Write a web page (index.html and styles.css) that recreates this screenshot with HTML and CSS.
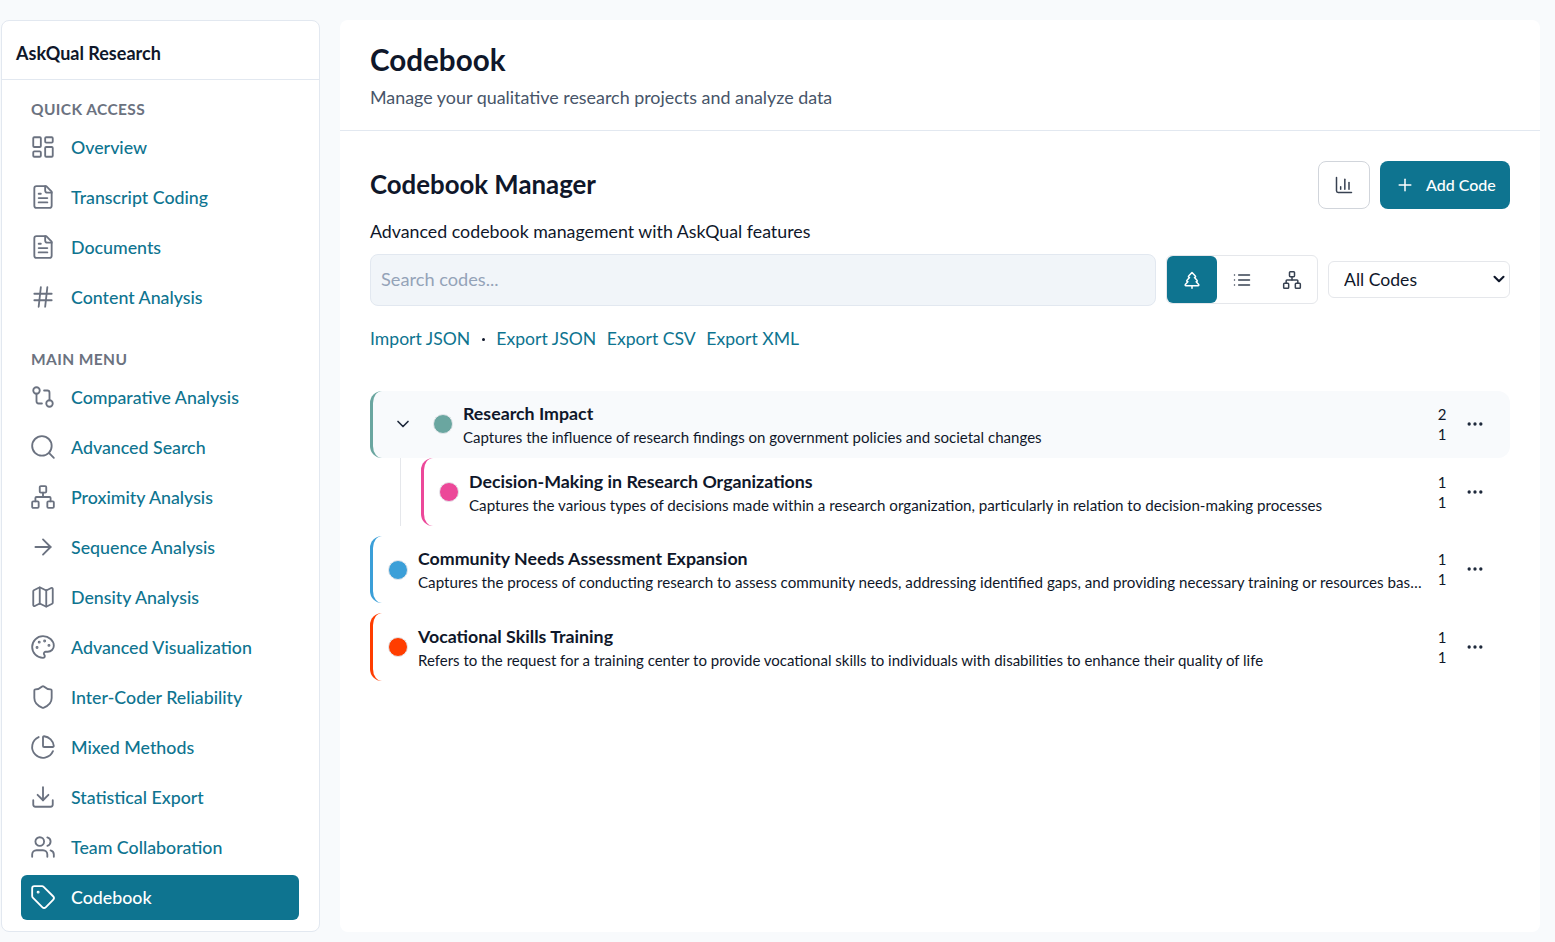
FILE: index.html
```html
<!DOCTYPE html>
<html lang="en">
<head>
    <meta charset="UTF-8">
    <meta name="viewport" content="width=device-width, initial-scale=1.0">
    <title>Codebook - AskQual Research</title>
    <link rel="stylesheet" href="styles.css">
</head>
<body>
    <aside class="sidebar">
        <div class="brand">AskQual Research</div>
        <nav class="nav">
            <div class="nav-label">QUICK ACCESS</div>
            <a class="nav-item"><svg class="icon" viewBox="0 0 24 24"><rect width="7" height="9" x="3" y="3" rx="1"/><rect width="7" height="5" x="14" y="3" rx="1"/><rect width="7" height="9" x="14" y="12" rx="1"/><rect width="7" height="5" x="3" y="16" rx="1"/></svg>Overview</a>
            <a class="nav-item"><svg class="icon" viewBox="0 0 24 24"><path d="M15 2H6a2 2 0 0 0-2 2v16a2 2 0 0 0 2 2h12a2 2 0 0 0 2-2V7Z"/><path d="M14 2v4a2 2 0 0 0 2 2h4"/><path d="M10 9H8"/><path d="M16 13H8"/><path d="M16 17H8"/></svg>Transcript Coding</a>
            <a class="nav-item"><svg class="icon" viewBox="0 0 24 24"><path d="M15 2H6a2 2 0 0 0-2 2v16a2 2 0 0 0 2 2h12a2 2 0 0 0 2-2V7Z"/><path d="M14 2v4a2 2 0 0 0 2 2h4"/><path d="M10 9H8"/><path d="M16 13H8"/><path d="M16 17H8"/></svg>Documents</a>
            <a class="nav-item"><svg class="icon" viewBox="0 0 24 24"><path d="M4 9h16"/><path d="M4 15h16"/><path d="M10 3 8 21"/><path d="M16 3l-2 18"/></svg>Content Analysis</a>

            <div class="nav-label nav-label-second">MAIN MENU</div>
            <a class="nav-item"><svg class="icon" viewBox="0 0 24 24"><circle cx="18" cy="18" r="3"/><circle cx="6" cy="6" r="3"/><path d="M13 6h3a2 2 0 0 1 2 2v7"/><path d="M11 18H8a2 2 0 0 1-2-2V9"/></svg>Comparative Analysis</a>
            <a class="nav-item"><svg class="icon" viewBox="0 0 24 24"><circle cx="11" cy="11" r="9"/><path d="m22 22-4.3-4.3"/></svg>Advanced Search</a>
            <a class="nav-item"><svg class="icon" viewBox="0 0 24 24"><rect x="16" y="16" width="6" height="6" rx="1"/><rect x="2" y="16" width="6" height="6" rx="1"/><rect x="9" y="2" width="6" height="6" rx="1"/><path d="M5 16v-3a1 1 0 0 1 1-1h12a1 1 0 0 1 1 1v3"/><path d="M12 12V8"/></svg>Proximity Analysis</a>
            <a class="nav-item"><svg class="icon" viewBox="0 0 24 24"><path d="M5 12h14"/><path d="m12 5 7 7-7 7"/></svg>Sequence Analysis</a>
            <a class="nav-item"><svg class="icon" viewBox="0 0 24 24"><path d="M14.106 5.553a2 2 0 0 0 1.788 0l3.659-1.83A1 1 0 0 1 21 4.619v12.764a1 1 0 0 1-.553.894l-4.553 2.277a2 2 0 0 1-1.788 0l-4.212-2.106a2 2 0 0 0-1.788 0l-3.659 1.83A1 1 0 0 1 3 19.381V6.618a1 1 0 0 1 .553-.894l4.553-2.277a2 2 0 0 1 1.788 0z"/><path d="M15 5.764v15"/><path d="M9 3.236v15"/></svg>Density Analysis</a>
            <a class="nav-item"><svg class="icon" viewBox="0 0 24 24"><circle cx="13.5" cy="6.5" r=".5" class="dot-fill"/><circle cx="17.5" cy="10.5" r=".5" class="dot-fill"/><circle cx="8.5" cy="7.5" r=".5" class="dot-fill"/><circle cx="6.5" cy="12.5" r=".5" class="dot-fill"/><path d="M12 2C6.5 2 2 6.5 2 12s4.5 10 10 10c.926 0 1.648-.746 1.648-1.688 0-.437-.18-.835-.437-1.125-.29-.289-.438-.652-.438-1.125a1.64 1.64 0 0 1 1.668-1.668h1.996c3.051 0 5.555-2.503 5.555-5.554C21.965 6.012 17.461 2 12 2z"/></svg>Advanced Visualization</a>
            <a class="nav-item"><svg class="icon" viewBox="0 0 24 24"><path d="M20 13c0 5-3.5 7.5-7.66 8.95a1 1 0 0 1-.67-.01C7.5 20.5 4 18 4 13V6a1 1 0 0 1 1-1c2 0 4.5-1.2 6.24-2.72a1.17 1.17 0 0 1 1.52 0C14.51 3.81 17 5 19 5a1 1 0 0 1 1 1z"/></svg>Inter-Coder Reliability</a>
            <a class="nav-item"><svg class="icon" viewBox="0 0 24 24"><path d="M21 12c.552 0 1.005-.449.95-.998a10 10 0 0 0-8.953-8.951c-.55-.055-.998.398-.998.95v8a1 1 0 0 0 1 1z"/><path d="M21.21 15.89A10 10 0 1 1 8 2.83"/></svg>Mixed Methods</a>
            <a class="nav-item"><svg class="icon" viewBox="0 0 24 24"><path d="M21 15v4a2 2 0 0 1-2 2H5a2 2 0 0 1-2-2v-4"/><path d="m7 10 5 5 5-5"/><path d="M12 15V3"/></svg>Statistical Export</a>
            <a class="nav-item"><svg class="icon" viewBox="0 0 24 24"><path d="M16 21v-2a4 4 0 0 0-4-4H6a4 4 0 0 0-4 4v2"/><circle cx="9" cy="7" r="4"/><path d="M22 21v-2a4 4 0 0 0-3-3.87"/><path d="M16 3.13a4 4 0 0 1 0 7.75"/></svg>Team Collaboration</a>
            <a class="nav-item active"><svg class="icon" viewBox="0 0 24 24"><path d="M12.586 2.586A2 2 0 0 0 11.172 2H4a2 2 0 0 0-2 2v7.172a2 2 0 0 0 .586 1.414l8.704 8.704a2.426 2.426 0 0 0 3.42 0l6.58-6.58a2.426 2.426 0 0 0 0-3.42z"/><circle cx="7.5" cy="7.5" r=".5" class="dot-fill"/></svg>Codebook</a>
        </nav>
    </aside>

    <main class="main">
        <header class="page-header">
            <h1>Codebook</h1>
            <p>Manage your qualitative research projects and analyze data</p>
        </header>

        <section class="manager">
            <div class="manager-top">
                <h2>Codebook Manager</h2>
                <div class="manager-actions">
                    <button class="btn-outline"><svg class="icon-sm" viewBox="0 0 24 24"><path d="M3 3v16a2 2 0 0 0 2 2h16"/><path d="M18 17V9"/><path d="M13 17V5"/><path d="M8 17v-3"/></svg></button>
                    <button class="btn-primary"><svg class="icon-add" viewBox="0 0 24 24"><path d="M5 12h14"/><path d="M12 5v14"/></svg>Add Code</button>
                </div>
            </div>
            <p class="manager-sub">Advanced codebook management with AskQual features</p>

            <div class="toolbar">
                <input class="search" type="text" placeholder="Search codes...">
                <div class="view-toggle">
                    <button class="view-btn selected"><svg class="icon-sm" viewBox="0 0 24 24"><path d="m17 14 3 3.3a1 1 0 0 1-.7 1.7H4.7a1 1 0 0 1-.7-1.7L7 14h-.3a1 1 0 0 1-.7-1.7L9 9h-.2A1 1 0 0 1 8 7.3L12 3l4 4.3a1 1 0 0 1-.8 1.7H15l3 3.3a1 1 0 0 1-.7 1.7H17Z"/><path d="M12 22v-3"/></svg></button>
                    <button class="view-btn"><svg class="icon-sm" viewBox="0 0 24 24"><path d="M3 12h.01"/><path d="M3 18h.01"/><path d="M3 6h.01"/><path d="M8 12h13"/><path d="M8 18h13"/><path d="M8 6h13"/></svg></button>
                    <button class="view-btn"><svg class="icon-sm" viewBox="0 0 24 24"><rect x="16" y="16" width="6" height="6" rx="1"/><rect x="2" y="16" width="6" height="6" rx="1"/><rect x="9" y="2" width="6" height="6" rx="1"/><path d="M5 16v-3a1 1 0 0 1 1-1h12a1 1 0 0 1 1 1v3"/><path d="M12 12V8"/></svg></button>
                </div>
                <div class="filter-wrap">
                    <select class="filter">
                        <option>All Codes</option>
                    </select>
                    <svg class="filter-chevron" viewBox="0 0 24 24"><path d="m6 9 6 6 6-6"/></svg>
                </div>
            </div>

            <div class="links">
                <a>Import JSON</a>
                <span class="link-dot"></span>
                <a>Export JSON</a>
                <a>Export CSV</a>
                <a>Export XML</a>
            </div>

            <div class="code-tree">
                <div class="code-row parent">
                    <svg class="chevron" viewBox="0 0 24 24"><path d="m6 9 6 6 6-6"/></svg>
                    <span class="swatch swatch-teal"></span>
                    <div class="code-text">
                        <div class="code-name">Research Impact</div>
                        <div class="code-desc">Captures the influence of research findings on government policies and societal changes</div>
                    </div>
                    <div class="counts"><span>2</span><span>1</span></div>
                    <svg class="more" viewBox="0 0 24 24"><circle cx="12" cy="12" r="1"/><circle cx="19" cy="12" r="1"/><circle cx="5" cy="12" r="1"/></svg>
                </div>
                <div class="child-wrap">
                    <div class="code-row child">
                        <span class="swatch swatch-pink"></span>
                        <div class="code-text">
                            <div class="code-name">Decision-Making in Research Organizations</div>
                            <div class="code-desc">Captures the various types of decisions made within a research organization, particularly in relation to decision-making processes</div>
                        </div>
                        <div class="counts"><span>1</span><span>1</span></div>
                        <svg class="more" viewBox="0 0 24 24"><circle cx="12" cy="12" r="1"/><circle cx="19" cy="12" r="1"/><circle cx="5" cy="12" r="1"/></svg>
                    </div>
                </div>
                <div class="code-row top-blue">
                    <span class="swatch swatch-blue"></span>
                    <div class="code-text">
                        <div class="code-name">Community Needs Assessment Expansion</div>
                        <div class="code-desc">Captures the process of conducting research to assess community needs, addressing identified gaps, and providing necessary training or resources based on the findings</div>
                    </div>
                    <div class="counts"><span>1</span><span>1</span></div>
                    <svg class="more" viewBox="0 0 24 24"><circle cx="12" cy="12" r="1"/><circle cx="19" cy="12" r="1"/><circle cx="5" cy="12" r="1"/></svg>
                </div>
                <div class="code-row top-orange">
                    <span class="swatch swatch-orange"></span>
                    <div class="code-text">
                        <div class="code-name">Vocational Skills Training</div>
                        <div class="code-desc">Refers to the request for a training center to provide vocational skills to individuals with disabilities to enhance their quality of life</div>
                    </div>
                    <div class="counts"><span>1</span><span>1</span></div>
                    <svg class="more" viewBox="0 0 24 24"><circle cx="12" cy="12" r="1"/><circle cx="19" cy="12" r="1"/><circle cx="5" cy="12" r="1"/></svg>
                </div>
            </div>
        </section>
    </main>
</body>
</html>
```

FILE: styles.css
```css
* {
    box-sizing: border-box;
}
body {
    margin: 0;
    height: 942px;
    padding: 20px 15px 10px 1px;
    display: flex;
    gap: 20px;
    overflow: hidden;
    background-color: #f8fafc;
    font-family: Lato, sans-serif;
    color: #0f172a;
}
svg {
    fill: none;
    stroke: currentColor;
    stroke-width: 2;
    stroke-linecap: round;
    stroke-linejoin: round;
    flex-shrink: 0;
}
.dot-fill {
    fill: currentColor;
}

/* sidebar */
.sidebar {
    width: 319px;
    flex-shrink: 0;
    background: white;
    border: 1px solid #e2e8f0;
    border-radius: 8px;
}
.brand {
    height: 59px;
    padding-left: 14px;
    padding-top: 5px;
    display: flex;
    align-items: center;
    font-size: 18px;
    font-weight: 700;
    color: #0f172a;
    border-bottom: 1px solid #e2e8f0;
}
.nav {
    padding: 17px 20px 0 19px;
}
.nav-label {
    height: 28px;
    padding-left: 10px;
    padding-top: 3px;
    font-size: 15.5px;
    font-weight: 700;
    letter-spacing: 0.4px;
    color: #6b7280;
}
.nav-label-second {
    margin-top: 27px;
}
.nav-item {
    height: 45px;
    margin-bottom: 5px;
    padding-left: 9px;
    padding-bottom: 1px;
    display: flex;
    align-items: center;
    gap: 15px;
    border-radius: 6px;
    font-size: 17.8px;
    font-weight: 500;
    color: #0e7490;
}
.nav-item .icon {
    width: 26px;
    height: 26px;
    stroke-width: 1.7;
    color: #6b7280;
}
.nav-item.active {
    background-color: #0e7490;
    color: white;
}
.nav-item.active .icon {
    color: white;
}

/* main panel */
.main {
    flex: 1;
    min-width: 0;
    background: white;
    border-radius: 8px;
}
.page-header {
    height: 111px;
    padding: 20px 30px 0;
    border-bottom: 1px solid #e2e8f0;
}
.page-header h1 {
    margin: 0;
    font-size: 29.6px;
    line-height: 40px;
    font-weight: 700;
    color: #0f172a;
}
.page-header p {
    margin: 5px 0 0;
    font-size: 17.9px;
    line-height: 24px;
    color: #475569;
}
.manager {
    padding: 30px;
}
.manager-top {
    display: flex;
    justify-content: space-between;
    align-items: center;
}
.manager-top h2 {
    margin: 0 0 2px;
    font-size: 25.8px;
    font-weight: 700;
    color: #0f172a;
}
.manager-actions {
    display: flex;
    gap: 10px;
}
.btn-outline {
    width: 52px;
    height: 48px;
    padding: 0;
    display: flex;
    align-items: center;
    justify-content: center;
    background: white;
    border: 1px solid #d1d5db;
    border-radius: 8px;
    color: #374151;
}
.btn-primary {
    width: 130px;
    height: 48px;
    padding: 0 0 1px 15px;
    display: flex;
    align-items: center;
    gap: 11px;
    background-color: #0e7490;
    border: none;
    border-radius: 8px;
    color: white;
    font-family: inherit;
    font-size: 16px;
    font-weight: 500;
}
.icon-sm {
    width: 20px;
    height: 20px;
    stroke-width: 1.8;
}
.icon-add {
    width: 20px;
    height: 20px;
    stroke-width: 1.8;
}
.manager-sub {
    margin: 10px 0 11px;
    font-size: 17.8px;
    line-height: 24px;
    color: #0f172a;
}
.toolbar {
    display: flex;
    align-items: center;
    gap: 10px;
}
.search {
    flex: 1;
    min-width: 0;
    height: 52px;
    padding: 0 10px 2px;
    background-color: #f1f5f9;
    border: 1px solid #e2e8f0;
    border-radius: 8px;
    font-family: inherit;
    font-size: 18.2px;
}
.search::placeholder {
    color: #94a3b8;
}
.view-toggle {
    width: 152px;
    height: 49px;
    margin-bottom: 1px;
    display: flex;
    border: 1px solid #e5e7eb;
    border-radius: 6px;
}
.view-btn {
    width: 50px;
    padding: 0;
    display: flex;
    align-items: center;
    justify-content: center;
    background: none;
    border: none;
    border-radius: 6px;
    color: #374151;
}
.view-btn.selected {
    background-color: #0e7490;
    color: white;
}
.filter-wrap {
    position: relative;
    width: 182px;
    height: 37px;
    margin-bottom: 1px;
}
.filter {
    width: 100%;
    height: 100%;
    padding: 0 0 0 15px;
    appearance: none;
    background: white;
    border: 1px solid #e5e7eb;
    border-radius: 6px;
    font-family: inherit;
    font-size: 17.6px;
    color: #0f172a;
}
.filter-chevron {
    position: absolute;
    top: 9px;
    right: 2px;
    width: 18px;
    height: 18px;
    stroke-width: 2.8;
    color: #0f172a;
    pointer-events: none;
}
.links {
    margin-top: 21px;
    display: flex;
    align-items: center;
    gap: 10.5px;
    font-size: 17.6px;
    line-height: 24px;
    color: #0e7490;
}
.link-dot {
    width: 3px;
    height: 3px;
    margin: 0 1px;
    border-radius: 50%;
    background-color: #0f172a;
}

/* code rows */
.code-tree {
    margin-top: 40px;
}
.code-row {
    height: 67px;
    padding-right: 25px;
    display: flex;
    align-items: center;
    border-left: 3px solid;
    border-radius: 12px;
}
.code-row.parent {
    background-color: #f8fafc;
    border-left-color: #6aa6a0;
    padding-left: 20px;
}
.code-row.parent .chevron,
.code-row.parent .swatch {
    margin-bottom: 2px;
}
.code-row.child {
    height: 68px;
    padding-left: 15px;
    border-left-color: #ec4899;
}
.code-row.top-blue {
    margin-top: 10px;
    padding-left: 15px;
    border-left-color: #3b9fd8;
}
.code-row.top-orange {
    margin-top: 10px;
    height: 68px;
    padding-left: 15px;
    border-left-color: #ff3d00;
}
.child-wrap {
    margin-left: 30px;
    padding-left: 20px;
    border-left: 1px solid #e5e7eb;
}
.chevron {
    width: 20px;
    height: 20px;
    margin-right: 20px;
    color: #1e293b;
}
.swatch {
    width: 20px;
    height: 20px;
    margin-right: 10px;
    flex-shrink: 0;
    border-radius: 50%;
    border: 1px solid #e5e7eb;
}
.swatch-teal { background-color: #6aa6a0; }
.swatch-pink { background-color: #ec4899; }
.swatch-blue { background-color: #3b9fd8; }
.swatch-orange { background-color: #ff3d00; }
.code-text {
    flex: 1;
    min-width: 0;
    padding-top: 1px;
}
.code-name {
    font-size: 17.8px;
    font-weight: 700;
    line-height: 24px;
    color: #0f172a;
}
.code-desc {
    font-size: 15.05px;
    line-height: 24px;
    color: #0f172a;
    white-space: nowrap;
    overflow: hidden;
    text-overflow: ellipsis;
}
.child .code-desc,
.top-blue .code-desc {
    font-size: 15.17px;
}
.top-orange .code-desc {
    font-size: 15px;
}
.counts {
    width: 20px;
    margin-left: 8px;
    margin-bottom: 1px;
    display: flex;
    flex-direction: column;
    align-items: center;
    font-size: 15px;
    line-height: 20px;
}
.more {
    width: 20px;
    height: 20px;
    margin-left: 13px;
    margin-bottom: 1px;
    color: #1e293b;
}
.child .more,
.top-orange .more {
    margin-bottom: 0;
}
```
